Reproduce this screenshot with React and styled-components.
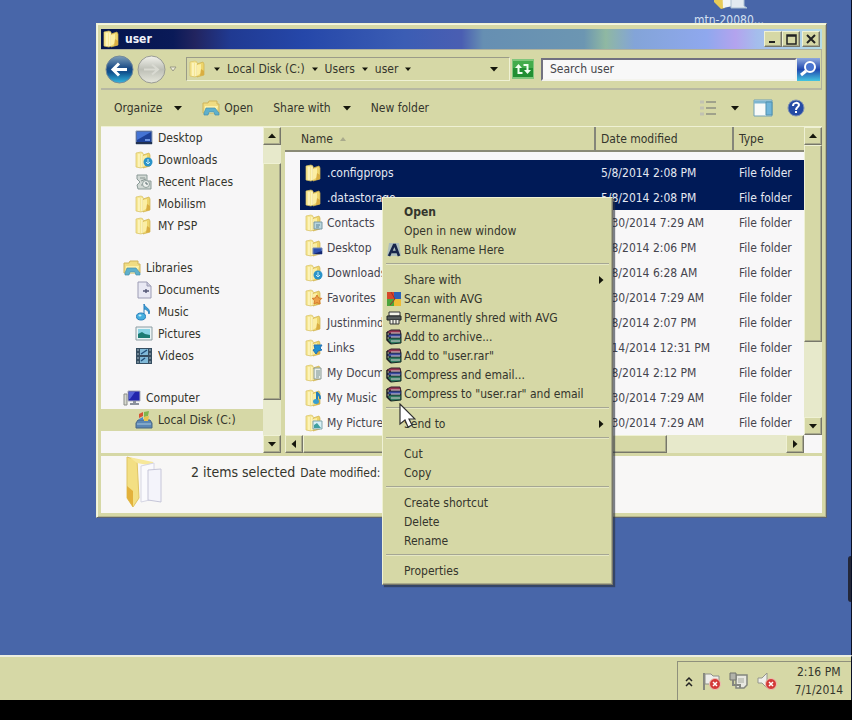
import React from "react";
import styled, { createGlobalStyle, css } from "styled-components";

const GlobalStyle = createGlobalStyle`
  * {
    box-sizing: border-box;
  }

  body {
    margin: 0;
    background: #000;
    color: #34352c;
    font: 12px/16px "DejaVu Sans Condensed", "Noto Sans", sans-serif;
  }

  button,
  input {
    margin: 0;
    padding: 0;
    border: 0;
    background: none;
    color: inherit;
    font: inherit;
  }

  ul {
    margin: 0;
    padding: 0;
    list-style: none;
  }

  svg {
    display: block;
    flex: none;
  }
`;

const face = "#d6d8a6";
const light = "#eff1d4";
const dark = "#77776a";
const navy = "#001a57";

const raised = css`
  background: ${face};
  border: 1px solid;
  border-color: ${light} ${dark} ${dark} ${light};
  box-shadow: inset -1px -1px 0 #a9aa8c;
`;

const Screen = styled.div`
  display: flex;
  flex-direction: column;
  min-height: 100vh;
  padding-bottom: 20px;
  background: #000;
`;

const Desktop = styled.main`
  position: relative;
  flex: 1;
  overflow: hidden;
  background: #4866a9;
  border-right: 1px solid #0b1024;
`;

const DesktopIcon = styled.div`
  position: absolute;
  top: -22px;
  right: 80px;
  width: 84px;
  display: flex;
  flex-direction: column;
  align-items: center;
  gap: 2px;
  color: #d4e0f2;
`;

const SideHandle = styled.div`
  position: absolute;
  right: 0;
  top: 556px;
  width: 3px;
  height: 46px;
  border-radius: 3px 0 0 3px;
  background: #23273a;
`;

const Window = styled.section`
  position: absolute;
  left: 96px;
  right: 24px;
  top: 23px;
  padding: 5px 4px 4px;
  background: ${face};
  border: 1px solid;
  border-color: ${light} #5f6470 #5f6470 ${light};
  box-shadow: inset 1px 1px 0 #f4f6e0, inset -1px -1px 0 #b4b690;
`;

const TitleBar = styled.header`
  display: flex;
  align-items: center;
  gap: 4px;
  height: 20px;
  padding: 0 2px;
  color: #f0f2fa;
  background: linear-gradient(
    to right,
    #04154c 0%,
    #0a1a58 10%,
    #22245f 13%,
    #203a92 18%,
    #2547a9 28%,
    #3b5db4 42%,
    #4a5eb2 50%,
    #668fb2 53%,
    #6c96b2 67%,
    #8fb8a2 70%,
    #83a4d8 74%,
    #8fa8ee 84%,
    #b3a3ee 88%,
    #a4bdec 91%,
    #b4dce6 100%
  );
`;

const Title = styled.h1`
  flex: 1;
  margin: 0;
  font-size: 12px;
  line-height: 18px;
`;

const WindowButtons = styled.div`
  display: flex;

  button:last-child {
    margin-left: 2px;
  }
`;

const WindowButton = styled.button`
  ${raised}
  display: flex;
  align-items: center;
  justify-content: center;
  width: 18px;
  height: 16px;
`;

const AddressBar = styled.nav`
  display: flex;
  align-items: center;
  height: 41px;
  padding: 0 1px 0 4px;
  border-top: 1px solid #b0b19c;
  border-bottom: 2px solid #b7b8a2;
  border-right: 1px solid #b0b19c;
`;

const HistoryButtons = styled.div`
  display: flex;
  align-items: center;
  gap: 3px;
  margin-right: 9px;
`;

const Path = styled.div`
  display: flex;
  flex: 1;
  align-items: center;
  gap: 7px;
  height: 24px;
  padding: 0 11px 0 2px;
  border: 1px solid;
  border-color: #9a9b88 ${light} ${light} #9a9b88;

  svg:last-child {
    margin-left: auto;
  }
`;

const RefreshButton = styled.button`
  margin: 0 7px 0 2px;
`;

const SearchInput = styled.input`
  flex: none;
  width: 256px;
  height: 23px;
  padding: 0 7px;
  background: #f8f8f8;
  border: 2px solid;
  border-color: #717180 #f4f4ee #f4f4ee #717180;

  &::placeholder {
    color: #45454a;
    opacity: 1;
  }
`;

const CommandBar = styled.div`
  display: flex;
  align-items: center;
  height: 37px;
  padding: 0 17px 0 13px;
  border-bottom: 1px solid ${light};
`;

const Command = styled.button`
  display: flex;
  align-items: center;
  gap: ${(props) => props.$gap || 4}px;
  margin-right: 20px;
`;

const ViewTools = styled.div`
  display: flex;
  align-items: center;
  gap: 14px;
  margin-left: auto;
`;

const Panes = styled.div`
  display: flex;
  gap: 4px;
`;

const Sidebar = styled.aside`
  display: flex;
  width: 180px;
  background: #f7f6f7;
`;

const Tree = styled.ul`
  flex: 1;
`;

const TreeItem = styled.li`
  display: flex;
  align-items: center;
  gap: 5px;
  height: 22px;
  margin-top: ${(props) => (props.$root ? 20 : 0)}px;
  padding-left: ${(props) => (props.$root ? 22 : 34)}px;
  background: ${(props) => (props.$selected ? face : "none")};
`;

const Listing = styled.div`
  flex: 1;
  min-width: 0;
  display: grid;
  grid-template-columns: 1fr 18px;
  background: #f8f7f8;
`;

const FileTable = styled.table`
  width: 100%;
  table-layout: fixed;
  border-collapse: separate;
  border-spacing: 0;
  white-space: nowrap;

  th,
  td {
    padding: 0 0 0 5px;
    text-align: left;
    overflow: hidden;
  }

  th {
    height: 25px;
    font-weight: 400;
    background: ${face};
    border-bottom: 2px solid #8a8a76;
    border-right: 2px solid #85867a;
  }

  th:first-child {
    padding-left: 16px;
  }

  th:last-child {
    border-right: 0;
  }
`;

const Spacer = styled.tbody`
  height: 8px;
`;

const FileRow = styled.tr`
  height: 25px;
  color: ${(props) => (props.$selected ? "#e4e8f2" : "#46454e")};

  td:not(:first-child) {
    background: ${(props) => (props.$selected ? navy : "none")};
  }
`;

const FileName = styled.div`
  display: flex;
  align-items: center;
  gap: 4px;
`;

const SortHeader = styled.span`
  display: flex;
  align-items: center;
  gap: 7px;
`;

const ScrollBar = styled.div`
  display: flex;
  flex-direction: ${(props) => (props.$horizontal ? "row" : "column")};
  ${(props) => (props.$horizontal ? "height" : "width")}: 18px;
  background: #e7e9cb;
`;

const ScrollButton = styled.button`
  ${raised}
  display: flex;
  align-items: center;
  justify-content: center;
  width: 18px;
  height: 18px;
`;

const Thumb = styled.div`
  ${raised}
  flex: ${(props) => props.$size};
`;

const Track = styled.div`
  flex: ${(props) => props.$size};
`;

const Details = styled.footer`
  display: flex;
  gap: 22px;
  height: 57px;
  margin-top: 3px;
  padding-left: 22px;
  background: #f8f7f6;
`;

const Summary = styled.p`
  margin: 8px 0 0;

  strong {
    margin-right: 5px;
    font-size: 14px;
    font-weight: 400;
  }
`;

const Menu = styled.div`
  ${raised}
  position: absolute;
  left: 382px;
  top: 197px;
  width: 231px;
  padding: 4px 3px;
  box-shadow: inset -1px -1px 0 #a9aa8c, 2px 2px 1px #2a2e3a99;

  hr {
    height: 2px;
    margin: 4px 0 5px;
    border: 0;
    border-top: 1px solid #a5a694;
    border-bottom: 1px solid #e6e8c4;
  }
`;

const MenuItem = styled.button`
  display: grid;
  grid-template-columns: 18px 1fr 12px;
  align-items: center;
  width: 100%;
  height: 19px;
  text-align: left;
  font-weight: ${(props) => (props.$strong ? 700 : 400)};
`;

const Pointer = styled.svg`
  position: absolute;
  left: 399px;
  top: 403px;
`;

const Taskbar = styled.footer`
  display: flex;
  justify-content: flex-end;
  height: 45px;
  padding-top: 4px;
  background: ${face};
  border-top: 2px solid #eceee0;
  border-right: 1px solid #0b1024;
`;

const Tray = styled.div`
  display: flex;
  align-items: center;
  gap: 8px;
  padding: 0 8px 0 7px;
  border: solid #8f907c;
  border-width: 1px 0 0 1px;
`;

const Clock = styled.time`
  margin-left: 10px;
  text-align: center;
  line-height: 18px;
`;

const rotations = { down: 0, left: 90, up: 180, right: 270 };

const Arrow = ({ to = "down", size = 8 }) => (
  <svg width={size} height={size} viewBox="0 0 8 8" aria-hidden="true">
    <path
      d="M0 2h8L4 6.5z"
      fill="#15160c"
      transform={`rotate(${rotations[to]} 4 4)`}
    />
  </svg>
);

const badges = {
  contact: (
    <g>
      <path d="M9 8h8v7H9z" fill="#b9d6de" stroke="#7898a4" />
      <path d="M11 11h4M11 13h3" stroke="#5b8295" />
    </g>
  ),
  desktop: (
    <g>
      <path d="M8 9h9v6H8z" fill="#2c50b0" stroke="#7489b4" />
      <path d="M8 15l9-3v3z" fill="#15276f" />
    </g>
  ),
  download: (
    <g>
      <circle cx="13" cy="11" r="4.5" fill="#2b93c9" />
      <path d="M13 8v5m-2-2 2 2 2-2" stroke="#bfeaf8" fill="none" />
    </g>
  ),
  star: (
    <path
      d="m12 6 1.6 3 3.2.4-2.3 2.3.6 3.3-3.1-1.5L9 15l.5-3.3-2.3-2.3 3.2-.4z"
      fill="#eda14a"
      stroke="#d77b2c"
    />
  ),
  link: (
    <path
      d="M9 6h8l-2 3 2 2-4 1-2 3-3-4 2-1z"
      fill="#1f90d2"
      stroke="#2472b5"
    />
  ),
  document: (
    <g>
      <path d="M9 4h7v11H9z" fill="#e8eeea" stroke="#8a9a94" />
      <path d="M11 7h4M11 9h4M11 11h4M11 13h3" stroke="#79908c" />
    </g>
  ),
  music: (
    <g>
      <path d="M12 12V3c1 3 4 3 3 7" fill="none" stroke="#247fbc" strokeWidth="2" />
      <ellipse cx="11" cy="12.5" rx="3" ry="2.5" fill="#399fd0" />
    </g>
  ),
  picture: (
    <g>
      <path d="M8 7h9v8H8z" fill="#d8f0f6" stroke="#81a5ad" />
      <path d="M9 14v-3l3-2 4 5z" fill="#40a0a0" />
    </g>
  ),
};

const FolderIcon = ({ badge, size = 18 }) => (
  <svg width={size} height={size} viewBox="0 0 18 18" aria-hidden="true">
    <path d="M1 2 6 1l2 1v14l-2 1-5-1z" fill="#f6e795" stroke="#d8c263" strokeWidth=".7" />
    <path d="M8 4 14 2l1 2v11l-7 2z" fill="#edd56c" stroke="#cfb04c" strokeWidth=".7" />
    <path d="M4 3v13M7 3v13" stroke="#fffbd2" strokeWidth="1.2" />
    <path d="m8 5 4-1v9l-4 3z" fill="#fbeea3" />
    <path d="m12 9 3 2v4l-4 1z" fill="#d9ae42" />
    {badges[badge]}
  </svg>
);

const treeGlyphs = {
  desktop: (
    <g>
      <path d="M1 2h16v13H1z" fill="#1d4198" stroke="#8d9db2" />
      <path d="M2 3h14L2 11z" fill="#4574d4" />
      <path d="M1 14h16" stroke="#22314f" strokeWidth="2" />
      <path d="M10 10h5v2h-5z" fill="#6f95e0" />
    </g>
  ),
  recent: (
    <g>
      <path d="M2 2h10v6h4v8H3l-1-4 3-3-3-3z" fill="#d2d9d5" stroke="#8b9a97" />
      <path d="M5 5h5M6 8l5-2M6 12h8" stroke="#85928f" />
      <circle cx="11" cy="11" r="3.5" fill="#eef1ee" stroke="#91a19d" />
      <path d="M11 9v2h2" fill="none" stroke="#596b6c" />
    </g>
  ),
  library: (
    <g>
      <path d="M1 4h5l1-2h8v3h2v9H1z" fill="#f0dc82" stroke="#cfb45a" />
      <path d="M3 7h13l-2 7H2z" fill="#fff2a8" />
      <path d="m2 14 2-5h9l4 5v2h-4l-1-3H7l-1 3H2z" fill="#5eb0cc" stroke="#4590ae" strokeWidth=".7" />
    </g>
  ),
  document: (
    <g>
      <path d="M3 1h9l4 4v12H3z" fill="#e8e8f3" stroke="#9c9cb4" />
      <path d="M12 1v4h4" fill="#c9c9dc" stroke="#9c9cb4" />
      <path d="M8 10h6M11 8v4" stroke="#535675" strokeWidth="1.4" />
    </g>
  ),
  music: (
    <g>
      <path d="M9 13V1c1 4 7 4 5 10 0-3-3-5-5-5" fill="#3d9fd7" stroke="#2a80bc" />
      <ellipse cx="6" cy="13.5" rx="4.5" ry="3.5" fill="#45afdf" stroke="#2a80bc" />
      <ellipse cx="5" cy="12.5" rx="1.5" ry="1" fill="#c5eefb" />
    </g>
  ),
  picture: (
    <g>
      <path d="M1 2h16v13H1z" fill="#e9f3f5" stroke="#8d9da3" />
      <path d="M3 4h12v9H3z" fill="#8ad3e4" />
      <path d="M3 13V9l4-2 3 2 5 1v3z" fill="#1d7b73" />
    </g>
  ),
  video: (
    <g>
      <path d="M1 1h16v16H1z" fill="#364e61" />
      <path d="M5 2h8v6H5zM5 10h8v6H5z" fill="#80b9d8" />
      <path d="M3 2v15M15 2v15" stroke="#8296a4" strokeWidth="1.5" strokeDasharray="2 2" />
      <path d="m6 7 6-4M6 14l4-3" stroke="#204f7c" strokeWidth="1.5" />
    </g>
  ),
  computer: (
    <g>
      <path d="M1 5h3v11H1z" fill="#d7d9d0" stroke="#8b8d89" />
      <path d="M5 2h12v10H5z" fill="#2125ad" stroke="#abafb8" />
      <path d="M6 3h6l-5 7H6z" fill="#5360d6" />
      <path d="M10 12h3v2h3v2H7v-2h3z" fill="#8c929d" />
    </g>
  ),
  disk: (
    <g>
      <path d="M3 9h12l2 3v5H1v-5z" fill="#5b86b4" stroke="#496684" />
      <path d="M2 13h14" stroke="#a9c7de" />
      <path d="m4 3 4-2v4L4 7z" fill="#d75335" />
      <path d="m9 1 5-1-1 5-4 1z" fill="#81b64e" />
      <path d="m4 8 4-2v3H4z" fill="#4789ca" />
      <path d="m9 6 5-1-1 5H9z" fill="#e7c44e" />
    </g>
  ),
};

const TreeGlyph = ({ name }) => (
  <svg width="18" height="18" viewBox="0 0 18 18" aria-hidden="true">
    {treeGlyphs[name]}
  </svg>
);

const menuGlyphs = {
  rename: (
    <g>
      <path d="M3 1h10l2 13H1z" fill="#aebfbd" />
      <path d="m3 14 5-11h1l4 11M6 10h6" fill="none" stroke="#17264c" strokeWidth="2.5" />
    </g>
  ),
  avg: (
    <g>
      <path d="M1 1h7v7H1z" fill="#d5482b" />
      <path d="M8 1h7v7H8z" fill="#2c62b9" />
      <path d="M1 8h7v7H1z" fill="#4ca53d" />
      <path d="M8 8h7v7H8z" fill="#eebc35" />
      <path d="m5 1 4 7-5 6" fill="none" stroke="#a4292b" />
    </g>
  ),
  shred: (
    <g>
      <path d="M3 2h11v4H3z" fill="#f2f2e8" stroke="#303334" />
      <path d="M1 6h14v4H1z" fill="#555b5c" stroke="#202425" />
      <path d="M4 10v4h9v-4" fill="#f2f2e8" stroke="#303334" />
      <path d="M7 10v4M10 10v4" stroke="#303334" />
    </g>
  ),
  rar: (
    <g>
      <path d="m1 3 4-2h9l1 4H4z" fill="#963451" stroke="#32202e" />
      <path d="m1 7 3-2h11v4H4z" fill="#3b4b9f" stroke="#1b2235" />
      <path d="m1 11 3-2h11v5l-10 1z" fill="#2f7b61" stroke="#162b27" />
      <path d="M5 4h9M5 8h9M5 12h9" stroke="#d7cfd1" />
      <path d="M1 3v8l4 4" fill="none" stroke="#1c1d24" strokeWidth="1.5" />
    </g>
  ),
};

const MenuGlyph = ({ name }) => (
  <svg width="16" height="16" viewBox="0 0 16 16" aria-hidden="true">
    {menuGlyphs[name]}
  </svg>
);

const tree = [
  { label: "Desktop", icon: "desktop" },
  { label: "Downloads", folder: "download" },
  { label: "Recent Places", icon: "recent" },
  { label: "Mobilism", folder: "plain" },
  { label: "MY PSP", folder: "plain" },
  { label: "Libraries", icon: "library", root: true },
  { label: "Documents", icon: "document" },
  { label: "Music", icon: "music" },
  { label: "Pictures", icon: "picture" },
  { label: "Videos", icon: "video" },
  { label: "Computer", icon: "computer", root: true },
  { label: "Local Disk (C:)", icon: "disk", selected: true },
];

const files = [
  { name: ".configprops", date: "5/8/2014 2:08 PM", selected: true },
  { name: ".datastorage", date: "5/8/2014 2:08 PM", selected: true },
  { name: "Contacts", date: "6/30/2014 7:29 AM", badge: "contact" },
  { name: "Desktop", date: "5/8/2014 2:06 PM", badge: "desktop" },
  { name: "Downloads", date: "5/8/2014 6:28 AM", badge: "download" },
  { name: "Favorites", date: "6/30/2014 7:29 AM", badge: "star" },
  { name: "Justinmind", date: "5/8/2014 2:07 PM" },
  { name: "Links", date: "6/14/2014 12:31 PM", badge: "link" },
  { name: "My Documents", date: "5/8/2014 2:12 PM", badge: "document" },
  { name: "My Music", date: "6/30/2014 7:29 AM", badge: "music" },
  { name: "My Pictures", date: "6/30/2014 7:29 AM", badge: "picture" },
];

const menuGroups = [
  [
    { label: "Open", strong: true },
    { label: "Open in new window" },
    { label: "Bulk Rename Here", icon: "rename" },
  ],
  [
    { label: "Share with", submenu: true },
    { label: "Scan with AVG", icon: "avg" },
    { label: "Permanently shred with AVG", icon: "shred" },
    { label: "Add to archive...", icon: "rar" },
    { label: 'Add to "user.rar"', icon: "rar" },
    { label: "Compress and email...", icon: "rar" },
    { label: 'Compress to "user.rar" and email', icon: "rar" },
  ],
  [{ label: "Send to", submenu: true }],
  [{ label: "Cut" }, { label: "Copy" }],
  [{ label: "Create shortcut" }, { label: "Delete" }, { label: "Rename" }],
  [{ label: "Properties" }],
];

const ExplorerHeader = () => (
  <>
    <TitleBar>
      <FolderIcon />
      <Title>user</Title>
      <WindowButtons>
        <WindowButton aria-label="Minimize">
          <svg width="10" height="10">
            <path d="M1 8h6" stroke="#222" strokeWidth="2" />
          </svg>
        </WindowButton>
        <WindowButton aria-label="Maximize">
          <svg width="11" height="11">
            <path d="M1 1h9v9H1zM1 2h9" fill="none" stroke="#222" strokeWidth="1.5" />
          </svg>
        </WindowButton>
        <WindowButton aria-label="Close">
          <svg width="10" height="10">
            <path d="m1 1 8 8M9 1 1 9" stroke="#222" strokeWidth="2" />
          </svg>
        </WindowButton>
      </WindowButtons>
    </TitleBar>
    <AddressBar>
      <HistoryButtons>
        <button aria-label="Back">
          <svg width="29" height="29" viewBox="0 0 29 29">
            <defs>
              <linearGradient id="back" x2="0" y2="1">
                <stop offset="0" stopColor="#7e9fba" />
                <stop offset=".45" stopColor="#1b4b86" />
                <stop offset=".6" stopColor="#10508d" />
                <stop offset="1" stopColor="#34b8e0" />
              </linearGradient>
            </defs>
            <circle cx="14.5" cy="14.5" r="13.5" fill="url(#back)" stroke="#758a9a" />
            <path d="M22 14.500H8m6-6-6 6 6 6" fill="none" stroke="#fff" strokeWidth="3" />
          </svg>
        </button>
        <button aria-label="Forward">
          <svg width="29" height="29" viewBox="0 0 29 29">
            <defs>
              <linearGradient id="forward" x2="0" y2="1">
                <stop offset="0" stopColor="#f2f2ec" />
                <stop offset=".5" stopColor="#bdbfb6" />
                <stop offset="1" stopColor="#e6e7dc" />
              </linearGradient>
            </defs>
            <circle cx="14.5" cy="14.5" r="13.5" fill="url(#forward)" stroke="#999b94" />
            <path d="M7 14.500h14m-6-5 6 5-6 5" fill="none" stroke="#d9dad2" strokeWidth="2" />
          </svg>
        </button>
        <button aria-label="Recent pages">
          <svg width="8" height="8">
            <path d="M1 2h6L4 6z" fill="#efeedd" stroke="#9b9b86" />
          </svg>
        </button>
      </HistoryButtons>
      <Path>
        <FolderIcon />
        <Arrow size={6} />
        <span>Local Disk (C:)</span>
        <Arrow size={6} />
        <span>Users</span>
        <Arrow size={6} />
        <span>user</span>
        <Arrow size={6} />
        <Arrow />
      </Path>
      <RefreshButton aria-label="Refresh">
        <svg width="22" height="20" viewBox="0 0 22 20">
          <path d="M0 0h22v20H0z" fill="#7fc67c" />
          <path d="M1 2h20v16H1z" fill="#43ac4b" />
          <path d="M1 9h20v9H1z" fill="#218f32" />
          <path d="M3 9h7L6.500 5zM12 11h7l-3.500 4z" fill="#f1fff0" />
          <path d="M6.500 8v6h4M15.500 11V6h-4" fill="none" stroke="#f1fff0" strokeWidth="2" />
        </svg>
      </RefreshButton>
      <SearchInput type="text" aria-label="Search user" placeholder="Search user" />
      <button aria-label="Search">
        <svg width="23" height="23" viewBox="0 0 23 23">
          <defs>
            <linearGradient id="search" x2="0" y2="1">
              <stop offset="0" stopColor="#8fa9de" />
              <stop offset=".5" stopColor="#2149b0" />
              <stop offset="1" stopColor="#43c5e0" />
            </linearGradient>
          </defs>
          <path d="M0 0h23v23H0z" fill="url(#search)" />
          <circle cx="13" cy="9" r="5" fill="#4a75d0" stroke="#fff" strokeWidth="2" />
          <path d="m9 13-5 4" stroke="#fff" strokeWidth="3" />
        </svg>
      </button>
    </AddressBar>
    <CommandBar>
      <Command $gap={12}>
        Organize <Arrow />
      </Command>
      <Command>
        <TreeGlyph name="library" />
        Open
      </Command>
      <Command $gap={12}>
        Share with <Arrow />
      </Command>
      <Command>New folder</Command>
      <ViewTools>
        <button aria-label="Change view">
          <svg width="18" height="18">
            <path d="M1 3h4M1 9h4M1 15h4" stroke="#c2c2b2" strokeWidth="3" />
            <path d="M7 3h10M7 9h10M7 15h10" stroke="#8f9082" strokeWidth="1.5" />
          </svg>
        </button>
        <button aria-label="View options">
          <Arrow />
        </button>
        <button aria-label="Preview pane">
          <svg width="20" height="18">
            <path d="M1 1h18v16H1z" fill="#f8faf9" stroke="#70a1b6" />
            <path d="M1 3h18" stroke="#7db5d0" strokeWidth="3" />
            <path d="M13 3h6v13h-6z" fill="#70b5da" stroke="#5190ad" />
          </svg>
        </button>
        <button aria-label="Help">
          <svg width="18" height="18">
            <circle cx="9" cy="9" r="8" fill="#254ba5" stroke="#8092b3" />
            <path d="M6 7c0-4 6-4 6-1 0 2-3 2-3 5m0 1v2" fill="none" stroke="#fff" strokeWidth="2" />
          </svg>
        </button>
      </ViewTools>
    </CommandBar>
  </>
);

const FolderTree = () => (
  <Sidebar>
    <Tree>
      {tree.map((item) => (
        <TreeItem key={item.label} $root={item.root} $selected={item.selected}>
          {item.folder ? (
            <FolderIcon badge={item.folder} />
          ) : (
            <TreeGlyph name={item.icon} />
          )}
          {item.label}
        </TreeItem>
      ))}
    </Tree>
    <ScrollBar>
      <ScrollButton aria-label="Scroll folders up">
        <Arrow to="up" />
      </ScrollButton>
      <Track $size={18} />
      <Thumb $size={237} />
      <Track $size={35} />
      <ScrollButton aria-label="Scroll folders down">
        <Arrow />
      </ScrollButton>
    </ScrollBar>
  </Sidebar>
);

const FileListing = () => (
  <Listing>
    <FileTable>
      <colgroup>
        <col width="15" />
        <col />
        <col width="138" />
        <col width="70" />
      </colgroup>
      <thead>
        <tr>
          <th colSpan={2}>
            <SortHeader>
              Name
              <svg width="6" height="4">
                <path d="M0 4 3 0l3 4z" fill="#a9aa8c" />
              </svg>
            </SortHeader>
          </th>
          <th>Date modified</th>
          <th>Type</th>
        </tr>
      </thead>
      <Spacer>
        <tr>
          <td colSpan={4} />
        </tr>
      </Spacer>
      <tbody>
        {files.map((file) => (
          <FileRow key={file.name} $selected={file.selected}>
            <td />
            <td>
              <FileName>
                <FolderIcon badge={file.badge} />
                {file.name}
              </FileName>
            </td>
            <td>{file.date}</td>
            <td>File folder</td>
          </FileRow>
        ))}
      </tbody>
    </FileTable>
    <ScrollBar>
      <ScrollButton aria-label="Scroll files up">
        <Arrow to="up" />
      </ScrollButton>
      <Thumb $size={197} />
      <Track $size={76} />
      <ScrollButton aria-label="Scroll files down">
        <Arrow />
      </ScrollButton>
    </ScrollBar>
    <ScrollBar $horizontal>
      <ScrollButton aria-label="Scroll files left">
        <Arrow to="left" />
      </ScrollButton>
      <Thumb $size={365} />
      <Track $size={120} />
      <ScrollButton aria-label="Scroll files right">
        <Arrow to="right" />
      </ScrollButton>
    </ScrollBar>
  </Listing>
);

const ContextMenu = () => (
  <Menu role="menu">
    {menuGroups.map((group, i) => (
      <React.Fragment key={group[0].label}>
        {i > 0 && <hr />}
        {group.map((item) => (
          <MenuItem key={item.label} role="menuitem" $strong={item.strong}>
            {item.icon ? <MenuGlyph name={item.icon} /> : <span />}
            {item.label}
            {item.submenu && <Arrow to="right" />}
          </MenuItem>
        ))}
      </React.Fragment>
    ))}
  </Menu>
);

const errorBadge = (
  <g>
    <circle cx="14" cy="13" r="5.5" fill="#d33a38" stroke="#eec0b4" />
    <path d="m12 11 4 4m0-4-4 4" stroke="#fff" strokeWidth="1.5" />
  </g>
);

const SystemTray = () => (
  <Tray>
    <button aria-label="Show hidden icons">
      <svg width="8" height="11">
        <path d="m1 5 3-3 3 3M1 10l3-3 3 3" fill="none" stroke="#222" strokeWidth="1.5" />
      </svg>
    </button>
    <svg width="20" height="20">
      <path d="M3 2v17" stroke="#85877e" strokeWidth="2" />
      <path d="M4 3h6l2 2h6v8H4z" fill="#eeeeea" stroke="#8e9088" />
      {errorBadge}
    </svg>
    <svg width="20" height="20">
      <path d="M7 4h11v10l-3 3H7z" fill="#e8e8e1" stroke="#83857e" strokeWidth="1.5" />
      <path d="M1 2h6v7H1z" fill="#b1b2aa" stroke="#73756e" />
      <path d="M4 9v5h7v3" fill="none" stroke="#84867f" strokeWidth="2" />
      <path d="M9 7h6v5H9z" fill="#c6c8bf" />
    </svg>
    <svg width="20" height="20">
      <path d="M1 7h4l5-5v15l-5-5H1z" fill="#efefeb" stroke="#94968c" />
      {errorBadge}
    </svg>
    <Clock>
      2:16 PM
      <br />
      7/1/2014
    </Clock>
  </Tray>
);

const App = () => {
  return (
    <Screen>
      <GlobalStyle />
      <Desktop>
        <DesktopIcon>
          <svg width="40" height="32" viewBox="0 0 40 32">
            <path d="M5 4h8l3 26-4 1-7-7z" fill="#e8cb58" />
            <path d="m13 4 11-2v26l-10 2z" fill="#f2f5f5" />
            <path d="m22 8 13-2v22l3 2H22z" fill="#e2eaf0" stroke="#abc0d2" />
          </svg>
          mtn-20080...
        </DesktopIcon>
        <SideHandle />
        <Window>
          <ExplorerHeader />
          <Panes>
            <FolderTree />
            <FileListing />
          </Panes>
          <Details>
            <svg width="46" height="54" viewBox="0 0 46 54">
              <path d="m4 1 10 3 2 38-6 9-6-9z" fill="#f3df83" stroke="#e0c564" />
              <path d="m4 30 6 5v16l-6-9z" fill="#e3b13b" />
              <path d="m6 1 24 5v4L14 7z" fill="#f7e89a" />
              <path d="m18 10 13-3v36l-13 3z" fill="#fafafd" stroke="#d6d6e4" />
              <path d="m25 14 13-1v33l-13-2z" fill="#f4f4fb" stroke="#c6c6d8" />
            </svg>
            <Summary>
              <strong>2 items selected</strong>
              Date modified:
            </Summary>
          </Details>
        </Window>
        <ContextMenu />
        <Pointer width="17" height="25" viewBox="0 0 17 25">
          <path d="M1 1v20l5-4 3 7 4-2-3-6h6z" fill="#fff" stroke="#303030" strokeWidth="1.2" />
        </Pointer>
      </Desktop>
      <Taskbar>
        <SystemTray />
      </Taskbar>
    </Screen>
  );
};

export default App;
